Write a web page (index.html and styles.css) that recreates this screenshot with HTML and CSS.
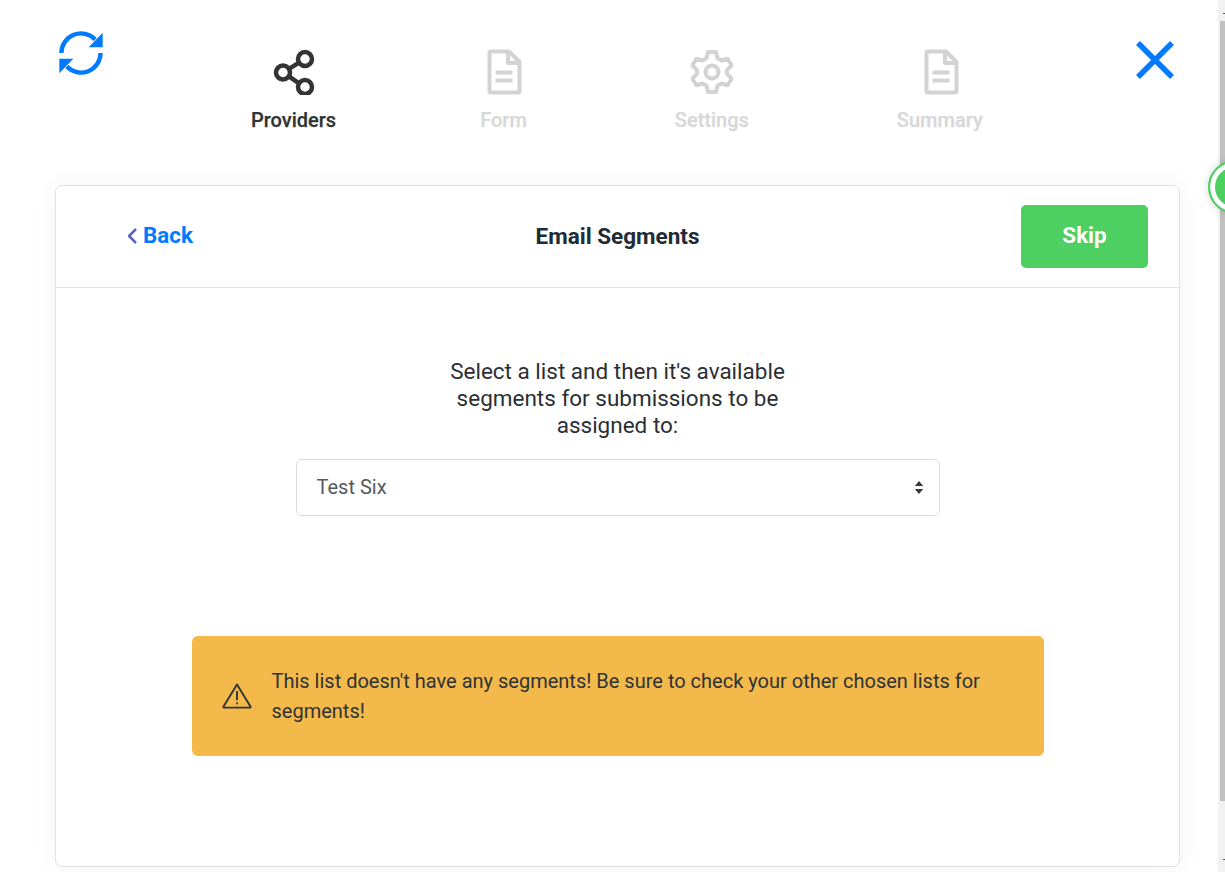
FILE: index.html
```html
<!DOCTYPE html>
<html lang="en">
<head>
<meta charset="utf-8">
<title>Email Segments</title>
<link rel="stylesheet" href="styles.css">
</head>
<body>
<div class="page">
  <header class="top">
    <svg class="refresh" viewBox="0 0 45 45" aria-hidden="true">
      <path class="blue-stroke" d="M2.5 22.5A20 20 0 0 1 37 8.7"/>
      <path class="blue-stroke" d="M42.5 22.5A20 20 0 0 1 8 36.3"/>
      <path class="blue-fill" d="M44.7 1.7V16.7H30.3Z"/>
      <path class="blue-fill" d="M.3 43.3V28.3H14.7Z"/>
    </svg>
    <nav class="steps">
      <div class="step active">
        <svg class="step-icon" viewBox="0 0 46 46" aria-hidden="true">
          <circle cx="34" cy="10" r="7"/><circle cx="12" cy="23.500" r="7"/><circle cx="34" cy="38" r="7"/>
          <path d="M18 19.800 28 13.700M18 27.300 28 34.300"/>
        </svg>
        <span>Providers</span>
      </div>
      <div class="step">
        <svg class="step-icon" viewBox="0 0 46 46" aria-hidden="true">
          <path d="M11 2.500H29L39.500 13V42A1.500 1.500 0 0 1 38 43.500H11A1.500 1.500 0 0 1 9.500 42V4A1.500 1.500 0 0 1 11 2.500Z"/>
          <path d="M28 2.500V14H39.500M15.500 23.500H32.500M15.500 31.500H32.500"/>
        </svg>
        <span>Form</span>
      </div>
      <div class="step">
        <svg class="step-icon" viewBox="0 0 46 46" aria-hidden="true">
          <circle cx="23" cy="23" r="6.500"/>
          <path d="M19 3H27L28.500 9.200 32.500 11.500 38.600 9.700 42.600 16.600 38 21V25L42.600 29.400 38.600 36.300 32.500 34.500 28.500 36.800 27 43H19L17.500 36.800 13.500 34.500 7.400 36.300 3.400 29.400 8 25V21L3.400 16.600 7.400 9.700 13.500 11.500 17.500 9.200Z"/>
        </svg>
        <span>Settings</span>
      </div>
      <div class="step">
        <svg class="step-icon" viewBox="0 0 46 46" aria-hidden="true">
          <path d="M11 2.500H29L39.500 13V42A1.500 1.500 0 0 1 38 43.500H11A1.500 1.500 0 0 1 9.500 42V4A1.500 1.500 0 0 1 11 2.500Z"/>
          <path d="M28 2.500V14H39.500M15.500 23.500H32.500M15.500 31.500H32.500"/>
        </svg>
        <span>Summary</span>
      </div>
    </nav>
    <svg class="close" viewBox="0 0 40 40" aria-hidden="true">
      <path d="M3 3 37 37M37 3 3 37"/>
    </svg>
  </header>

  <main class="card">
    <div class="card-head">
      <a class="back"><svg class="chev" viewBox="0 0 9 16" aria-hidden="true"><path d="M8 1 1 8 8 15"/></svg>Back</a>
      <h1 class="title">Email Segments</h1>
      <button class="skip">Skip</button>
    </div>
    <div class="card-body">
      <p class="intro">Select a list and then it's available segments for submissions to be assigned to:</p>
      <div class="select">
        <span>Test Six</span>
        <svg class="updown" viewBox="0 0 10 14" aria-hidden="true"><path d="M5 0 9.500 5.500H.5ZM5 14 .5 8.500H9.500Z"/></svg>
      </div>
      <div class="alert">
        <svg class="warn" viewBox="0 0 32 28" aria-hidden="true">
          <path d="M16 1.500 30.500 25.200A.8.8 0 0 1 30 26.500H2A.8.8 0 0 1 1.500 25.200Z"/>
          <path d="M16 8.500V18.500M16 21V23"/>
        </svg>
        <p>This list doesn't have any segments! Be sure to check your other chosen lists for segments!</p>
      </div>
    </div>
  </main>
</div>
<div class="scrollbar"><div class="thumb"></div></div>
<div class="bubble"></div>
</body>
</html>
```
FILE: styles.css
```css
* { box-sizing: border-box; }
html, body { margin: 0; height: 100%; overflow: hidden; background: #fff; }
body { font-family: Roboto, "Liberation Sans", sans-serif; color: #2b2f33; }
.page { width: 1218px; height: 872px; padding: 0 0 0 55px; display: flex; flex-direction: column; }
.top { height: 185px; width: 1125px; position: relative; display: flex; }
.refresh { position: absolute; left: 3.500px; top: 30.500px; width: 44px; height: 44px; }
.blue-stroke { fill: none; stroke: #007bff; stroke-width: 4.5; }
.blue-fill { fill: #007bff; }
.close { position: absolute; left: 1080px; top: 40px; width: 40px; height: 40px; fill: none; stroke: #007bff; stroke-width: 5.5; }
.steps { display: flex; gap: 148px; margin-left: 196px; padding-top: 49px; }
.step { display: flex; flex-direction: column; align-items: center; font-size: 20px; font-weight: 500; line-height: 24px; color: #d8d8d8; -webkit-text-stroke: .25px currentColor; }
.step.active { color: #333; margin-right: -4px; }
.step-icon { width: 46px; height: 46px; margin-bottom: 13px; fill: none; stroke: #d3d3d3; stroke-width: 4; stroke-linejoin: round; }
.step.active .step-icon { stroke: #333; stroke-width: 4.5; }
.card { width: 1125px; height: 682px; background: #fff; border: 1px solid #e2e2e2; border-radius: 7px; box-shadow: 0 0 24px rgba(0,0,0,.05); display: flex; flex-direction: column; }
.card-head { height: 102px; flex: none; border-bottom: 1px solid #e2e2e2; display: flex; align-items: center; justify-content: space-between; padding: 0 31px 0 72px; position: relative; }
.back { display: flex; align-items: center; gap: 6px; color: #007bff; font-size: 22.400px; font-weight: 700; padding-bottom: 4px; }
.chev { width: 9px; height: 16px; margin-top: 2px; fill: none; stroke: #5a63bd; stroke-width: 2.500; }
.title { position: absolute; left: 0; right: 0; text-align: center; margin: 0 0 2px; font-size: 22.500px; font-weight: 700; color: #212b36; pointer-events: none; }
.skip { width: 127px; height: 63px; border: 0; border-radius: 5px; background: #4ecf62; color: #fff; padding: 0 0 4px; font: 700 22.400px Roboto, sans-serif; }
.card-body { flex: 1; display: flex; flex-direction: column; align-items: center; padding-top: 70px; }
.intro { width: 350px; margin: 0 0 20px; text-align: center; font-size: 22.500px; line-height: 27px; color: #2b2f33; }
.select { width: 644px; height: 57px; border: 1px solid #dcdcdc; border-radius: 6px; padding: 0 20px 2px; display: flex; align-items: center; justify-content: space-between; font-size: 20px; color: #55595c; }
.updown { width: 10px; height: 13px; fill: #343a40; margin: 2px -5px 0 0; }
.alert { width: 852px; height: 120px; margin-top: 120px; background: #f3b94a; border-radius: 6px; display: flex; align-items: center; padding: 0 30px; gap: 19px; font-size: 20px; line-height: 30px; color: #2f3338; }
.alert p { margin: 0; }
.warn { width: 30px; height: 26px; margin-right: 1px; flex: none; fill: none; stroke: #2f3338; stroke-width: 2; stroke-linejoin: round; }
.scrollbar { position: absolute; right: 0; top: 0; width: 7px; height: 872px; background: #f1f1f1; }
.scrollbar::before, .scrollbar::after { content: ""; position: absolute; right: 0; width: 2px; height: 1px; background: #555; }
.scrollbar::before { top: 13px; }
.scrollbar::after { bottom: 12px; }
.thumb { margin: 21px 0 0 2px; height: 780px; background: #c1c1c1; }
.bubble { position: absolute; left: 1208px; top: 160px; width: 54px; height: 54px; border-radius: 50%; background: #4ecf62; border: 2px solid #4ecf62; box-shadow: inset 0 0 0 5px #fff, 0 0 10px rgba(0,0,0,.15); }
```
